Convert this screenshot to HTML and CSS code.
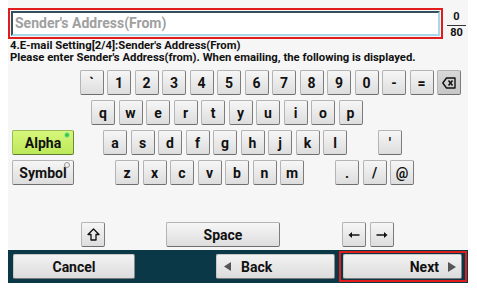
FILE: index.html
```html
<!DOCTYPE html>
<html>
<head>
<meta charset="utf-8">
<link rel="stylesheet" href="styles.css">
</head>
<body>
<div class="screen">
  <div class="top">
    <div class="field-frame"><div class="field">Sender's Address(From)</div></div>
    <div class="counter"><span class="num">0</span><span class="den">80</span></div>
  </div>
  <div class="info">
    <div>4.E-mail Setting[2/4]:Sender's Address(From)</div>
    <div>Please enter Sender's Address(from). When emailing, the following is displayed.</div>
  </div>
  <div class="kb">
    <div class="row r1">
      <div class="k">`</div><div class="k">1</div><div class="k">2</div><div class="k">3</div><div class="k">4</div><div class="k">5</div><div class="k">6</div><div class="k">7</div><div class="k">8</div><div class="k">9</div><div class="k">0</div><div class="k">-</div><div class="k">=</div>
      <div class="k bs"><svg width="14" height="12" viewBox="0 0 14 12"><path d="M4.5 1 H13 V11 H4.5 L0.8 6 Z" fill="none" stroke="#111" stroke-width="1.4" stroke-linejoin="round"/><path d="M6.5 3.5 L10.5 8.5 M10.5 3.5 L6.5 8.5" stroke="#111" stroke-width="1.5"/></svg></div>
    </div>
    <div class="row r2">
      <div class="k">q</div><div class="k">w</div><div class="k">e</div><div class="k">r</div><div class="k">t</div><div class="k">y</div><div class="k">u</div><div class="k">i</div><div class="k">o</div><div class="k">p</div>
    </div>
    <div class="row r3">
      <div class="mode alpha">Alpha<span class="dot on"></span></div>
      <div class="keys k3">
        <div class="k">a</div><div class="k">s</div><div class="k">d</div><div class="k">f</div><div class="k">g</div><div class="k">h</div><div class="k">j</div><div class="k">k</div><div class="k">l</div><div class="k blank"></div><div class="k">'</div>
      </div>
    </div>
    <div class="row r4">
      <div class="mode">Symbol<span class="dot"></span></div>
      <div class="keys k4">
        <div class="k">z</div><div class="k">x</div><div class="k">c</div><div class="k">v</div><div class="k">b</div><div class="k">n</div><div class="k">m</div><div class="k blank"></div><div class="k">.</div><div class="k">/</div><div class="k">@</div>
      </div>
    </div>
    <div class="row r5">
      <div class="k shift"><svg width="13" height="13" viewBox="0 0 13 13"><path d="M6.5 1 L12 6.5 H9 V12 H4 V6.5 H1 Z" fill="none" stroke="#111" stroke-width="1.3" stroke-linejoin="round"/></svg></div>
      <div class="k space">Space</div>
      <div class="k arrow left"><svg width="12" height="8" viewBox="0 0 12 8"><path d="M11.5 4 H3" stroke="#111" stroke-width="1.5"/><path d="M0.5 4 L4 1 V7 Z" fill="#111"/></svg></div>
      <div class="k arrow"><svg width="12" height="8" viewBox="0 0 12 8"><path d="M0.5 4 H9" stroke="#111" stroke-width="1.5"/><path d="M11.5 4 L8 1 V7 Z" fill="#111"/></svg></div>
    </div>
  </div>
  <div class="bar">
    <div class="btn cancel">Cancel</div>
    <div class="btn back"><svg width="7" height="9" viewBox="0 0 7 9"><path d="M0 4.5 L7 0 V9 Z" fill="#555"/></svg><span>Back</span></div>
    <div class="next-frame"><div class="btn next"><span>Next</span><svg width="8" height="10" viewBox="0 0 8 10"><path d="M8 5 L0 0 V10 Z" fill="#555"/></svg></div></div>
  </div>
</div>
</body>
</html>
```

FILE: styles.css
```css
html, body {
  margin: 0;
  padding: 0;
  background: #ffffff;
}
body {
  font-family: Roboto, "Liberation Sans", Arial, sans-serif;
  font-weight: bold;
  color: #111;
}
.screen {
  margin-left: 8px;
  width: 460px;
  height: 283px;
  background: #f6f6f6;
  display: flex;
  flex-direction: column;
}
.top {
  margin-top: 8px;
  height: 31px;
  display: flex;
  align-items: stretch;
}
.field-frame {
  width: 435px;
  box-sizing: border-box;
  border: 2px solid #e01c1c;
  padding: 1px;
}
.field {
  height: 100%;
  box-sizing: border-box;
  border-style: solid;
  border-width: 2px;
  border-color: #34505e #a6d8ea #a6d8ea #34505e;
  background: #fff;
  color: #a0a0a0;
  font-size: 14px;
  line-height: 21px;
  padding-left: 2px;
}
.counter {
  margin-left: 4px;
  width: 19px;
  display: flex;
  flex-direction: column;
  align-items: center;
  font-size: 11px;
  line-height: 12px;
  padding-top: 3px;
}
.counter .num {
  width: 100%;
  text-align: center;
  border-bottom: 1px solid #333;
  padding-bottom: 2px;
}
.counter .den {
  padding-top: 1px;
}
.info {
  height: 24px;
  padding-left: 2px;
  font-size: 11.3px;
  line-height: 11.5px;
  padding-top: 1px;
  box-sizing: border-box;
  white-space: nowrap;
}
.kb {
  padding-top: 7px;
  display: flex;
  flex-direction: column;
  gap: 5px;
}
.row {
  display: flex;
  height: 25px;
  gap: 3.5px;
}
.keys {
  display: flex;
  gap: 3.5px;
}
.r1 { padding-left: 71.5px; }
.r2 { padding-left: 83px; }
.r3, .r4 { padding-left: 4px; gap: 0; }
.k3 { margin-left: 29px; }
.k4 { margin-left: 41px; }
.r5 { padding-left: 73px; margin-top: 32px; gap: 0; }
.k {
  width: 24px;
  height: 25px;
  box-sizing: border-box;
  border: 1px solid;
  border-color: #b4b4b4 #7c7c7c #6e6e6e #b4b4b4;
  border-radius: 2px;
  background: linear-gradient(#f6f6f6, #dddddd);
  display: flex;
  align-items: center;
  justify-content: center;
  font-size: 14px;
}
.k.blank { visibility: hidden; }
.k.bs { background: linear-gradient(#d8d8d8, #c6c6c6); }
.k.space { width: 114px; margin-left: 61px; }
.k.arrow.left { margin-left: 62px; }
.k.arrow { margin-left: 4px; }
.mode {
  position: relative;
  width: 62px;
  height: 25px;
  box-sizing: border-box;
  border: 1px solid;
  border-color: #b4b4b4 #7c7c7c #6e6e6e #b4b4b4;
  border-radius: 2px;
  background: linear-gradient(#f6f6f6, #dddddd);
  display: flex;
  align-items: center;
  justify-content: center;
  font-size: 14px;
}
.mode.alpha {
  background: linear-gradient(#d6f77a, #bde85a);
  border-color: #9cbc5a #6d8a38 #5e7a30 #9cbc5a;
}
.dot {
  position: absolute;
  right: 3px;
  top: 1px;
  width: 4px;
  height: 4px;
  border-radius: 50%;
  border: 1px solid #999;
  background: #f0f0f0;
}
.dot.on {
  background: #38c838;
  border-color: #a8e8a0;
}
.bar {
  margin-top: 3px;
  height: 34px;
  background: #0b3846;
  display: flex;
  align-items: center;
  padding-left: 5px;
}
.btn {
  height: 25px;
  box-sizing: border-box;
  border: 1px solid;
  border-color: #c8c8c8 #8a8a8a #7a7a7a #c8c8c8;
  border-radius: 2px;
  background: linear-gradient(#f2f2f2, #dcdcdc);
  display: flex;
  align-items: center;
  font-size: 14px;
}
.cancel {
  width: 122px;
  justify-content: center;
}
.back {
  width: 119px;
  margin-left: 81px;
  padding-left: 7px;
  gap: 10px;
}
.next-frame {
  margin-left: 4px;
  width: 128px;
  height: 31px;
  box-sizing: border-box;
  border: 2px solid #e01c1c;
  padding: 1px 2px;
  display: flex;
  align-items: center;
}
.next {
  width: 119px;
  height: 25px;
  justify-content: flex-end;
  padding-right: 5px;
  gap: 9px;
}
```
